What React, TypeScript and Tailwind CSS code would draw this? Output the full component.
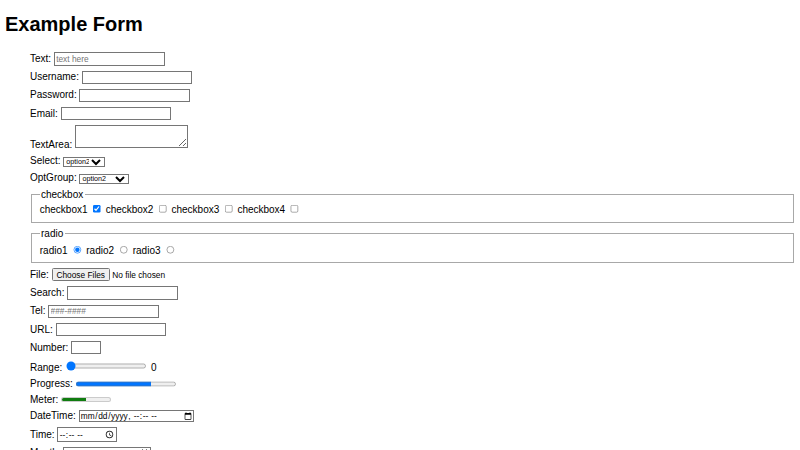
const F = "w-[177px]! box-border!";

export default function App() {
  return (
    <div className="[zoom:0.625] px-2 font-['Liberation_Sans',Arial,sans-serif] text-[16px] leading-[normal] text-black bg-white [&_input]:[all:revert] [&_select]:[all:revert] [&_textarea]:[all:revert] [&_fieldset]:[all:revert] [&_legend]:[all:revert] [&_progress]:[all:revert] [&_meter]:[all:revert] [&_input::file-selector-button]:[all:revert] [&_input::placeholder]:[all:revert] [&_input]:font-['Liberation_Sans',Arial,sans-serif]! [&_select]:font-['Liberation_Sans',Arial,sans-serif]! [&_select]:text-[11.5px]! [&_fieldset]:border-solid! [&_fieldset]:border-2! [&_fieldset]:border-[#a8a8a8]!">
      <h1 className="text-[32px] font-bold mt-[21.44px] mb-[21.44px]">Example Form</h1>
      <form>
        <ul className="pl-10 list-none">
          <li className="py-1">
            <label>
              Text: <input className={F} type="text" placeholder="text here" />
            </label>
          </li>
          <li className="py-1">
            <label>
              Username: <input className={F} type="text" name="username" />
            </label>
          </li>
          <li className="py-1">
            <label>
              Password: <input className={F} type="password" />
            </label>
          </li>
          <li className="py-1">
            <label>
              Email: <input className={F} type="email" />
            </label>
          </li>
          <li className="py-1">
            <label>
              TextArea: <textarea className="w-[180px]! h-[36px]! box-border!"></textarea>
            </label>
          </li>
          <li className="py-1">
            <label>
              Select:{" "}
              <select className="w-[66px]!" defaultValue="option2">
                <option value="option1">option1</option>
                <option value="option2">option2</option>
                <option value="option3">option3</option>
              </select>
            </label>
          </li>
          <li className="py-1">
            <label>
              OptGroup:{" "}
              <select className="w-[80px]!" defaultValue="option2">
                <optgroup label="Group 1">
                  <option value="option1">option1</option>
                  <option value="option2">option2</option>
                </optgroup>
                <optgroup label="Group 2">
                  <option value="option3">option3</option>
                </optgroup>
              </select>
            </label>
          </li>
          <li className="py-1">
            <fieldset>
              <legend>checkbox</legend>
              <label>
                checkbox1 <input type="checkbox" defaultChecked />
              </label>{" "}
              <label>
                checkbox2 <input type="checkbox" />
              </label>{" "}
              <label>
                checkbox3 <input type="checkbox" />
              </label>{" "}
              <label>
                checkbox4 <input type="checkbox" />
              </label>
            </fieldset>
          </li>
          <li className="py-1">
            <fieldset className="pt-[8.6px]!">
              <legend>radio</legend>
              <label>
                radio1 <input type="radio" name="r" defaultChecked />
              </label>{" "}
              <label>
                radio2 <input type="radio" name="r" />
              </label>{" "}
              <label>
                radio3 <input type="radio" name="r" />
              </label>
            </fieldset>
          </li>
          <li className="py-1">
            <label>
              File: <input type="file" multiple />
            </label>
          </li>
          <li className="py-1">
            <label>
              Search: <input className={F} type="search" />
            </label>
          </li>
          <li className="py-1">
            <label>
              Tel: <input className={F} type="tel" placeholder="###-####" />
            </label>
          </li>
          <li className="py-1">
            <label>
              URL: <input className={F} type="url" />
            </label>
          </li>
          <li className="py-1">
            <label>
              Number: <input className="w-[48px]! box-border!" type="number" min={0} max={99} />
            </label>
          </li>
          <li className="py-1">
            <label>
              Range: <input type="range" min={0} max={100} defaultValue={0} /> <span>0</span>
            </label>
          </li>
          <li className="py-1">
            <label>
              Progress: <progress value={75} max={100}></progress>
            </label>
          </li>
          <li className="py-1">
            <label>
              Meter: <meter value={0.5}></meter>
            </label>
          </li>
          <li className="py-1">
            <label>
              DateTime: <input className="w-[185px]! box-border!" type="datetime-local" />
            </label>
          </li>
          <li className="py-1">
            <label>
              Time: <input className="w-[95px]! box-border!" type="time" />
            </label>
          </li>
          <li className="py-1">
            <label>
              Month: <input className="w-[140px]! box-border!" type="month" />
            </label>
          </li>
          <li className="py-1">
            <label>
              Week: <input type="week" />
            </label>
          </li>
          <li className="py-1">
            <label>
              Color: <input type="color" />
            </label>
          </li>
        </ul>
      </form>
    </div>
  );
}
